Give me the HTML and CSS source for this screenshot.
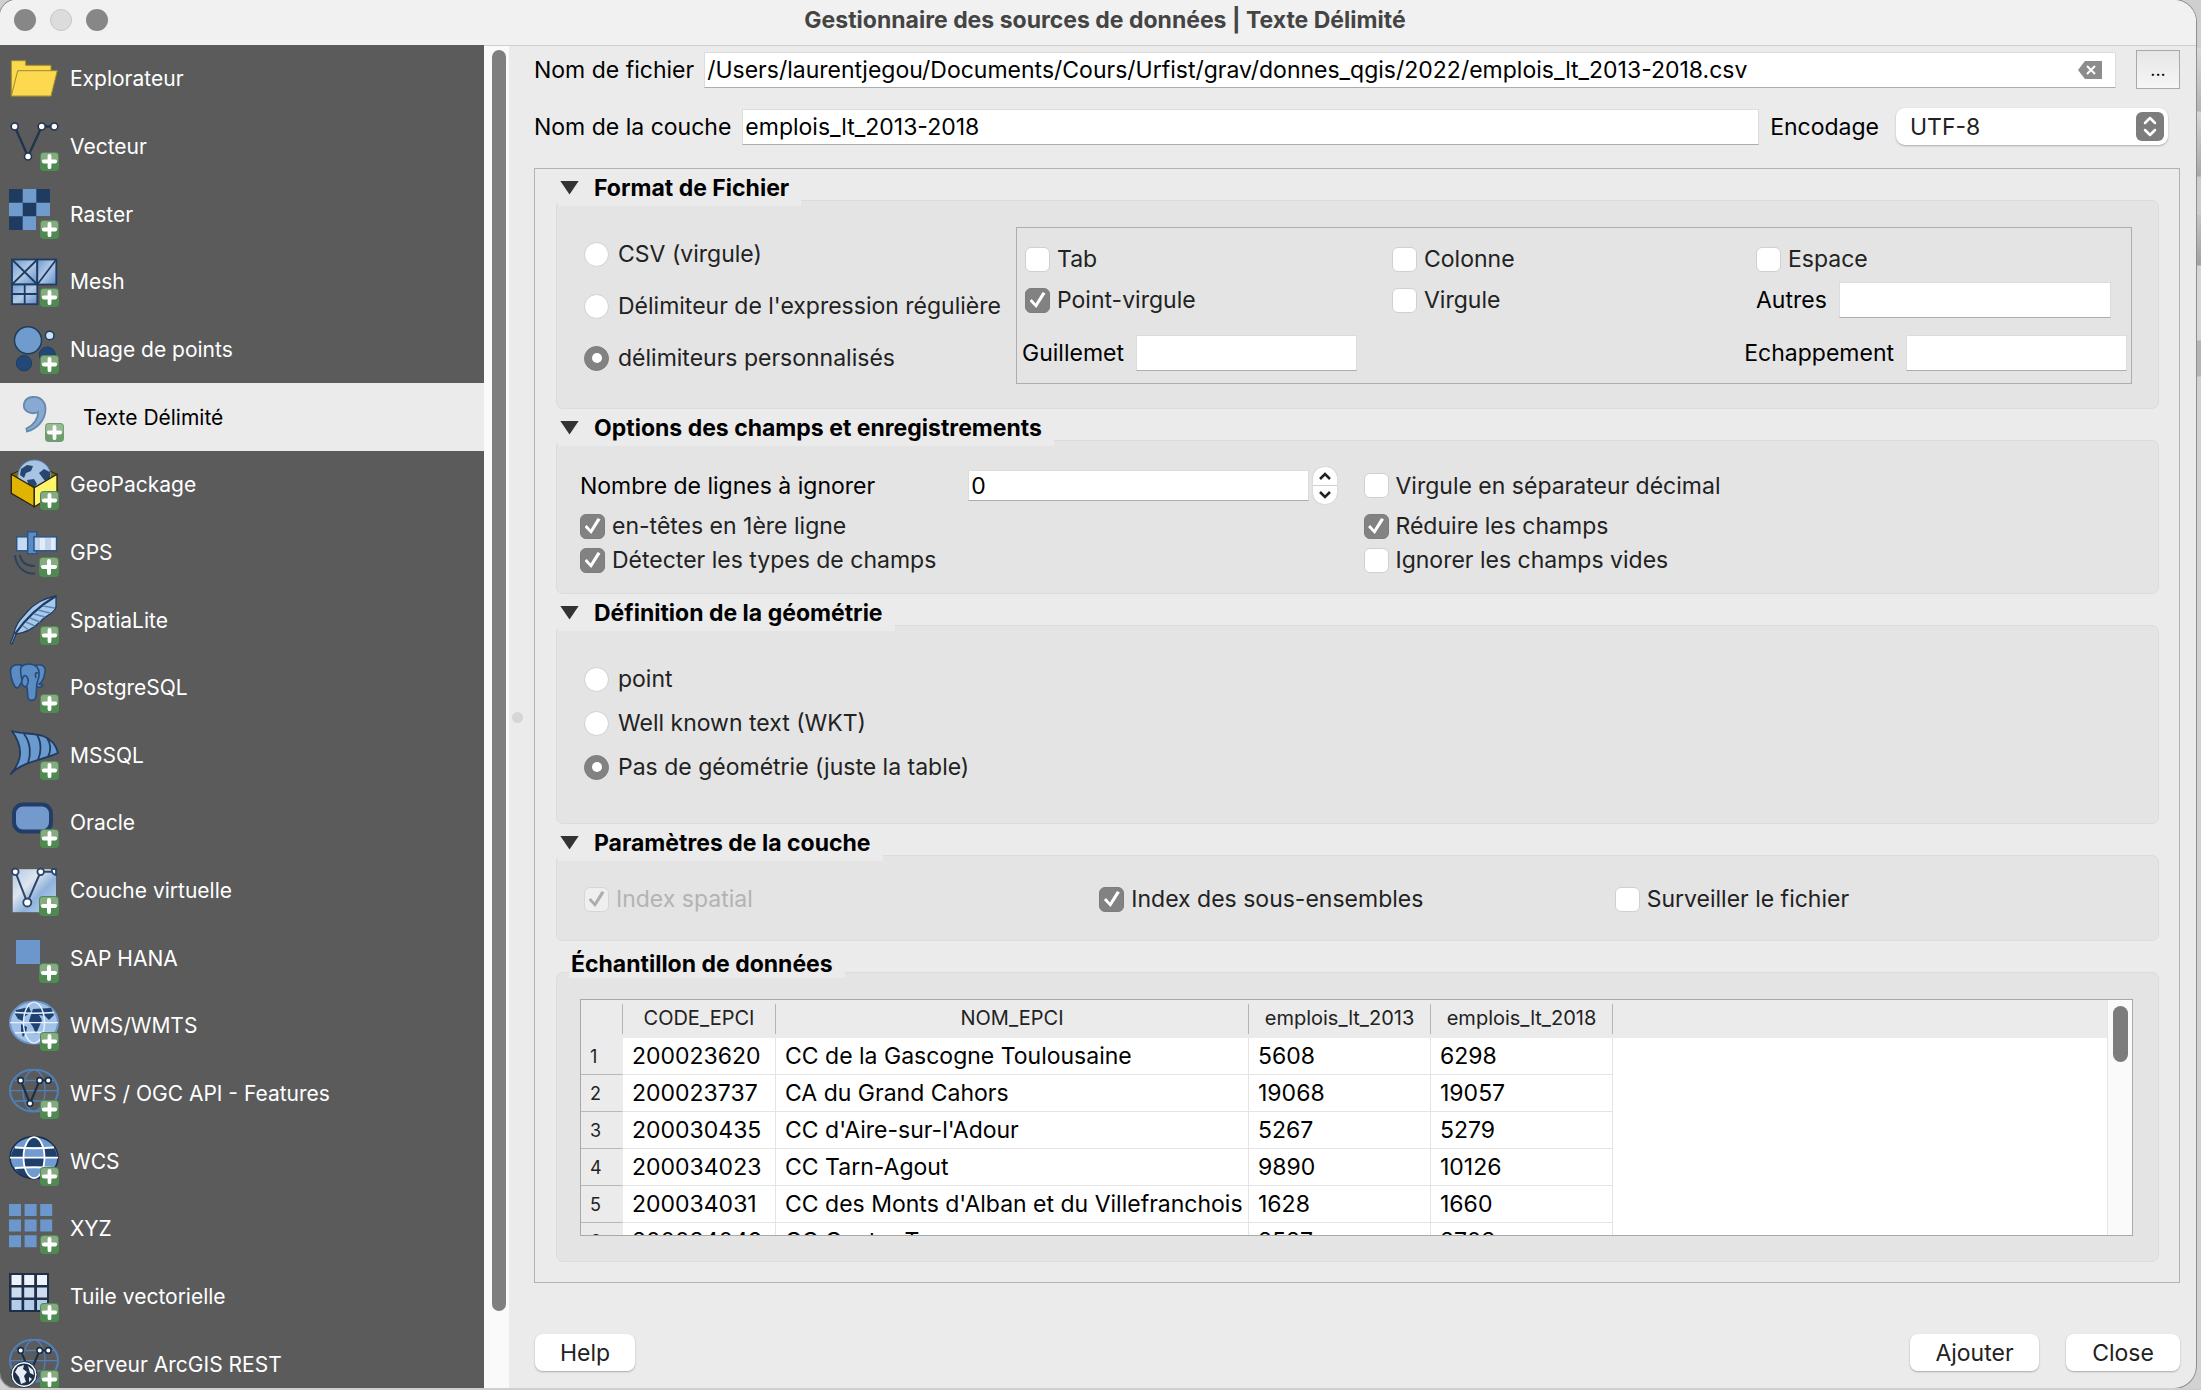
FILE: index.html
```html
<!DOCTYPE html>
<html lang="fr">
<head>
<meta charset="utf-8">
<title>Gestionnaire des sources de données | Texte Délimité</title>
<link rel="stylesheet" href="styles.css">
</head>
<body>
<svg class="defs" width="0" height="0" aria-hidden="true">
  <defs>
    <linearGradient id="pale" x1="0" y1="0" x2="1" y2="1">
      <stop offset="0" stop-color="#6f9bd0"/><stop offset=".5" stop-color="#b4cbe8"/><stop offset="1" stop-color="#5f8fc8"/>
    </linearGradient>
    <linearGradient id="sheet" x1="0" y1="0" x2="1" y2="1">
      <stop offset="0" stop-color="#b3c9e4"/><stop offset=".35" stop-color="#dfe6ef"/><stop offset=".6" stop-color="#8fb2dc"/><stop offset="1" stop-color="#c3d8f0"/>
    </linearGradient>
    <symbol id="badge" viewBox="0 0 20 20">
      <rect x="0" y="0" width="20" height="20" rx="4" fill="#4f8a50"/>
      <path d="M1 10V4Q1 1 4 1H16Q19 1 19 4V10Z" fill="#86ab82"/>
      <path d="M10 4V16M4 10H16" stroke="#fff" stroke-width="4" stroke-linecap="round"/>
    </symbol>
    <symbol id="lines" viewBox="0 0 50 50">
      <path d="M1 21.600H49M6 11.500Q25 13 45 11.500M6 32Q25 30.500 45 32" />
      <ellipse cx="25" cy="21.600" rx="10.500" ry="20.500"/>
    </symbol>
    <symbol id="netglobe" viewBox="0 0 50 50">
      <g fill="none" stroke="#4f80ba" stroke-width="1.300">
        <path d="M1 21.600H49M6 11.500H45M6 32H45"/>
        <ellipse cx="25" cy="21.600" rx="11" ry="20.500"/>
        <ellipse cx="25" cy="21.600" rx="24" ry="21" stroke-width="2"/>
      </g>
      <path d="M11.700 11.400L21 34.400L30.700 11.400H39.300" fill="none" stroke="#1d2f48" stroke-width="2.200"/>
      <g fill="#fff" stroke="#1d2f48" stroke-width="1.600">
        <circle cx="11.700" cy="11.400" r="2.800"/><circle cx="21" cy="34.400" r="2.800"/><circle cx="30.700" cy="11.400" r="2.800"/><circle cx="39.300" cy="11.400" r="2.800"/>
      </g>
    </symbol>
  </defs>
</svg>

<div class="window">
  <header class="titlebar">
    <div class="lights"><button class="light" aria-label="Fermer"></button><button class="light light-off" aria-label="Réduire" disabled></button><button class="light" aria-label="Agrandir"></button></div>
    <h1 class="title">Gestionnaire des sources de données | Texte Délimité</h1>
  </header>

  <div class="body">
    <nav class="sidebar">
      <ul class="sources">
        <li><a class="source" href="#"><svg class="icon" viewBox="0 0 50 50"><path d="M2.300 6.700H16.700V11.300H42V42H2.300Z" fill="#fbd94c" stroke="#9c8a32"/><path d="M8.700 16.700H48.300L42 42H2.300Z" fill="#fcd94e" stroke="#9c8a32"/></svg>Explorateur</a></li>
        <li><a class="source" href="#"><svg class="icon" viewBox="0 0 50 50"><path d="M5.700 5.500L19 35.500L32.700 5.500H45.300" fill="none" stroke="#22344e" stroke-width="2.400"/><g fill="#fff" stroke="#22344e" stroke-width="1.600"><circle cx="5.700" cy="5.500" r="3.500"/><circle cx="19" cy="35.500" r="3.500"/><circle cx="32.700" cy="5.500" r="3.500"/><circle cx="45.300" cy="5.500" r="3.500"/></g><use href="#badge" x="31" y="31" width="19" height="19"/></svg>Vecteur</a></li>
        <li><a class="source" href="#"><svg class="icon" viewBox="0 0 50 50"><path d="M0 0H41V27H27V41H0Z" fill="#6f9bcd"/><path d="M0 0H13.700V13.700H0ZM27.300 0H41V13.700H27.300ZM13.700 13.700H27.300V27.300H13.700ZM0 27.300H13.700V41H0Z" fill="#1f3c60"/><use href="#badge" x="31" y="31" width="19" height="19"/></svg>Raster</a></li>
        <li><a class="source" href="#"><svg class="icon" viewBox="0 0 50 50"><g stroke="#1f3c60" stroke-width="1.800" fill="url(#pale)"><rect x="3" y="2.500" width="25.300" height="25"/><rect x="28.300" y="2.500" width="19" height="25"/><rect x="3" y="27.500" width="25.300" height="19.700"/><path d="M3 2.500L28.300 27.500M28.300 2.500L3 27.500M47.300 2.500L28.300 27.500M15.700 27.500V47M3 37H28.300" fill="none"/></g><use href="#badge" x="31" y="31" width="19" height="19"/></svg>Mesh</a></li>
        <li><a class="source" href="#"><svg class="icon" viewBox="0 0 50 50"><circle cx="19" cy="16.200" r="13.500" fill="#6f9bcd" stroke="#1f3c60" stroke-width="1.500"/><circle cx="40.700" cy="11.500" r="4.300" fill="#cfe2f8" stroke="#1f3c60" stroke-width="1.500"/><circle cx="38.300" cy="31" r="8" fill="#22487a" stroke="#1f3c60"/><circle cx="15" cy="39.200" r="7.700" fill="#22487a" stroke="#1f3c60"/><use href="#badge" x="31" y="31" width="19" height="19"/></svg>Nuage de points</a></li>
        <li><a class="source source-active" href="#" aria-current="page"><svg class="icon" viewBox="0 0 50 50"><path d="M19 5C26 4.500 31.500 9 31.500 17C31.500 29 22 37 13 39.500L12.500 36.500C20 33 24.500 26 24 20C21 21.500 17 21.500 14 20C7 16 9 5.500 19 5Z" fill="#7099cc" stroke="#44709f" stroke-width="1.800"/><use href="#badge" x="31" y="31" width="19" height="19"/></svg>Texte Délimité</a></li>
        <li><a class="source" href="#"><svg class="icon" viewBox="0 0 50 50"><path d="M2.300 14.300L25.300 4L48 14.300L25.300 27.700Z" fill="#7a6a10" stroke="#2a2408"/><circle cx="25.300" cy="16.500" r="16.500" fill="#a9c3e4" stroke="#5f86b5"/><path d="M12 9L18 5L24 6L22 11L17 13L15 18L11 15ZM30 13L35 9L41 12V18L36 21ZM18 20L25 19L28 24L24 29L20 26Z" fill="#27466d"/><path d="M2.300 14.300L25.300 27.700V46.700L2.300 33.300Z" fill="#e0b400" stroke="#2a2408" stroke-width="1.300"/><path d="M48 14.300L25.300 27.700V46.700L48 33.300Z" fill="#fff36a" stroke="#2a2408" stroke-width="1.300"/><use href="#badge" x="31" y="31" width="19" height="19"/></svg>GeoPackage</a></li>
        <li><a class="source" href="#"><svg class="icon" viewBox="0 0 50 50"><path d="M6 28C7 39 14 46.500 26 46.800M11 28C12 35 17 39 26 39" fill="none" stroke="#2b4360" stroke-width="2"/><g stroke="#2c5586" stroke-width="1.500"><rect x="7.700" y="9.800" width="12" height="14" fill="#c4dbf2"/><rect x="18.700" y="4.800" width="9" height="22" fill="#5c8cc4"/><rect x="25" y="9.800" width="22.700" height="14" fill="#bcd4ee"/></g><path d="M31 11H36V23H31ZM42 11H46V23H42Z" fill="#e6ebf2"/><use href="#badge" x="30" y="30" width="20" height="20"/></svg>GPS</a></li>
        <li><a class="source" href="#"><svg class="icon" viewBox="0 0 50 50"><path d="M47 1C34 4 26 8 18 17C10 26 6 30 5 39L1.500 48L3 49L7 39C17 38 25 33 32 26C36 21 46 18 47 12Z" fill="#a9c9ea" stroke="#1f3c60" stroke-width="1.300"/><path d="M47 1C30 11 17 23 6 39" fill="none" stroke="#1f3c60" stroke-width="2.200"/><path d="M34 11L46 13M29 15L41 18M25 19L36 22M21 23L31 27M17 27L26 31M14 31L20 35" stroke="#5c86b5" stroke-width="1.400"/><use href="#badge" x="31" y="31" width="19" height="19"/></svg>SpatiaLite</a></li>
        <li><a class="source" href="#"><svg class="icon" viewBox="0 0 50 50"><g fill="#5c8cc4" stroke="#254a78" stroke-width="1.600" stroke-linejoin="round"><path d="M14 3C8 0 1 2 1.500 9C2 17 5 24 8 25C10 25 12 20 13 18Z"/><path d="M26 3C32 0 37 3 36 9C35 16 32 20 30 21L34 22C32 25 29 25 27 23Z"/><path d="M12 4C16 0 24 0 28 4C32 9 30 15 28 20C27 26 28 33 26 36C24 38 20 38 19 35L18 24C14 24 12 21 13 17C12 13 11 8 12 4Z"/><path d="M13 17Q15 10 18 14T17 24M27 15Q25 9 29 10" fill="none"/></g><use href="#badge" x="31" y="31" width="19" height="19"/></svg>PostgreSQL</a></li>
        <li><a class="source" href="#"><svg class="icon" viewBox="0 0 50 50"><path d="M3 1C12 4 24 3 34 6C42 9 47 15 49 22.700C38 29 14 31 1.700 44C13 31 15 18 3 1Z" fill="#6a9ace" stroke="#1f3c60" stroke-width="1.800" stroke-linejoin="round"/><path d="M15 4C22 13 22 25 19 33M28 5C33 13 32 23 29 30M38 8C42 14 42 21 39 27" fill="none" stroke="#1f3c60" stroke-width="1.800"/><use href="#badge" x="31" y="31" width="19" height="19"/></svg>MSSQL</a></li>
        <li><a class="source" href="#"><svg class="icon" viewBox="0 0 50 50"><rect x="5" y="6.500" width="37" height="27" rx="9" fill="#7499cd" stroke="#213d68" stroke-width="4"/><use href="#badge" x="31" y="31" width="19" height="19"/></svg>Oracle</a></li>
        <li><a class="source" href="#"><svg class="icon" viewBox="0 0 50 50"><rect x="3.700" y="3.200" width="43.300" height="43" fill="url(#sheet)"/><path d="M6.300 5.800L18.300 36.500L31.700 5.800H45.300" fill="none" stroke="#2c4668" stroke-width="2"/><g fill="#fff" stroke="#2c4668" stroke-width="1.800"><circle cx="18.300" cy="36.500" r="4"/><circle cx="31.700" cy="5.800" r="3.300"/><circle cx="6.300" cy="5.800" r="3.300"/><path d="M47 3V9Q42 8 43 3Z"/></g><use href="#badge" x="30" y="30" width="20" height="20"/></svg>Couche virtuelle</a></li>
        <li><a class="source" href="#"><svg class="icon" viewBox="0 0 50 50"><rect x="3" y="3" width="32.500" height="33" fill="none" stroke="#4f5c70" stroke-width="2" stroke-dasharray="2 3"/><rect x="7" y="7" width="24" height="24" fill="#6c97cd"/><use href="#badge" x="30" y="30" width="20" height="20"/></svg>SAP HANA</a></li>
        <li><a class="source" href="#"><svg class="icon" viewBox="0 0 50 50"><ellipse cx="25" cy="21.600" rx="24" ry="21" fill="#a3c2e8" stroke="#6d97ca" stroke-width="2"/><path d="M7 9L20 6L22 11L15 16L14 20L9 18L6 13ZM12 23L18 26L17 32L14 36L12 30ZM24 8L42 7L45 14L40 19L36 15L30 14L33 19L30 26L27 33L24 26L20 20L22 14Z" fill="#1f4371"/><use href="#lines" width="50" height="50" fill="none" stroke="#e8f2ff" stroke-width="1.400"/><use href="#badge" x="31" y="31" width="19" height="19"/></svg>WMS/WMTS</a></li>
        <li><a class="source" href="#"><svg class="icon" viewBox="0 0 50 50"><use href="#netglobe" width="50" height="50"/><use href="#badge" x="31" y="31" width="19" height="19"/></svg>WFS / OGC API - Features</a></li>
        <li><a class="source" href="#"><svg class="icon" viewBox="0 0 50 50"><ellipse cx="25" cy="21.600" rx="24" ry="21" fill="#6f9bd0"/><path d="M2 21.600Q2 16 6 11.500H16L14.500 21.600ZM34 11.500H45Q48 16 48 21.600H35.500ZM17 11.500Q20 1 25 1T33 11.500ZM14.500 21.600H35.500L34 32H16ZM6 32H16L22 42Q11 41 6 32ZM34 32H45Q40 41 28 42Z" fill="#1f3f6b"/><ellipse cx="25" cy="21.600" rx="24" ry="21" fill="none" stroke="#1d2f4c" stroke-width="1.600"/><use href="#lines" width="50" height="50" fill="none" stroke="#fff" stroke-width="1.800"/><use href="#badge" x="31" y="31" width="19" height="19"/></svg>WCS</a></li>
        <li><a class="source" href="#"><svg class="icon" viewBox="0 0 50 50"><path d="M0 0h12v12h-12zM15.600 0h12v12h-12zM31.200 0h12v12h-12zM0 15.600h12v12h-12zM15.600 15.600h12v12h-12zM31.200 15.600h12v12h-12zM0 31.200h12v12h-12zM15.600 31.200h12v12h-12z" fill="#6c97cd"/><use href="#badge" x="31" y="31" width="19" height="19"/></svg>XYZ</a></li>
        <li><a class="source" href="#"><svg class="icon" viewBox="0 0 50 50"><rect x="0" y="1" width="40" height="39" fill="#1f2f48"/><path d="M2.500 3h10v10h-10zM15.200 3h10v10h-10zM28 3h10v10h-10z" fill="#eef3fa"/><path d="M2.500 15.500h10v10h-10zM15.200 15.500h10v10h-10zM28 15.500h10v10h-10z" fill="#cddcef"/><path d="M2.500 28h10v10h-10zM15.200 28h10v10h-10zM28 28h10v10h-10z" fill="#b3cce9"/><use href="#badge" x="31" y="31" width="19" height="19"/></svg>Tuile vectorielle</a></li>
        <li><a class="source" href="#"><svg class="icon" viewBox="0 0 50 50"><use href="#netglobe" width="50" height="50"/><circle cx="15" cy="35.500" r="13" fill="#fff" stroke="#1d2f48"/><circle cx="15" cy="35.500" r="11" fill="#1d2f48"/><path d="M6 33L9 28L15 26L14 30L18 33L15 37L17 43L12 45L10 38ZM19 27L24 31L25 36L21 34ZM20 38L23 40L20 43Z" fill="#e8edf4"/><use href="#badge" x="31" y="31" width="19" height="19"/></svg>Serveur ArcGIS REST</a></li>
      </ul>
    </nav>
    <div class="track"><div class="thumb"></div></div>
    <div class="splitter"><span class="grip"></span></div>

    <main class="main">
      <div class="row row-file">
        <label for="file">Nom de fichier</label>
        <div class="field filefield">
          <input class="bare" id="file" type="text" value="/Users/laurentjegou/Documents/Cours/Urfist/grav/donnes_qgis/2022/emplois_lt_2013-2018.csv">
          <button class="clear" aria-label="Effacer"><svg width="24" height="18" viewBox="0 0 24 18"><path d="M7 0H24V18H7L0 9Z" fill="#8c8c8c"/><path d="M9 5L17 13M17 5L9 13" stroke="#fff" stroke-width="2"/></svg></button>
        </div>
        <button class="browse" aria-label="Parcourir">...</button>
      </div>
      <div class="row row-layer">
        <label for="layer">Nom de la couche</label>
        <input class="field layerfield" id="layer" type="text" value="emplois_lt_2013-2018">
        <label for="enc">Encodage</label>
        <div class="combo">
          <select id="enc"><option>UTF-8</option></select>
          <svg class="knob" width="28" height="29" viewBox="0 0 28 29"><rect width="28" height="29" rx="6" fill="#7d7d7d"/><path d="M9 11L14 6L19 11M9 18L14 23L19 18" fill="none" stroke="#fff" stroke-width="2.500" stroke-linecap="round" stroke-linejoin="round"/></svg>
        </div>
      </div>

      <div class="frame">
        <section>
          <h2 class="head"><span class="tri"></span>Format de Fichier</h2>
          <div class="box box-format">
            <div class="radios">
              <label class="opt"><input type="radio" name="fmt">CSV (virgule)</label>
              <label class="opt"><input type="radio" name="fmt">Délimiteur de l'expression régulière</label>
              <label class="opt"><input type="radio" name="fmt" checked>délimiteurs personnalisés</label>
            </div>
            <div class="delims">
              <div class="delimgrid">
                <label class="opt"><input type="checkbox">Tab</label>
                <label class="opt"><input type="checkbox">Colonne</label>
                <label class="opt"><input type="checkbox">Espace</label>
                <label class="opt"><input type="checkbox" checked>Point-virgule</label>
                <label class="opt"><input type="checkbox">Virgule</label>
                <div class="other"><label for="other">Autres</label><input class="field" id="other" type="text"></div>
              </div>
              <div class="quotes">
                <label for="quote">Guillemet</label><input class="field short" id="quote" type="text">
                <label class="push" for="esc">Echappement</label><input class="field short" id="esc" type="text">
              </div>
            </div>
          </div>
        </section>

        <section>
          <h2 class="head"><span class="tri"></span>Options des champs et enregistrements</h2>
          <div class="box box-fields">
            <label for="skip">Nombre de lignes à ignorer</label>
            <div class="spin">
              <input class="field" id="skip" type="number" value="0">
              <div class="steps">
                <button aria-label="Augmenter"><svg width="14" height="10" viewBox="0 0 14 10"><path d="M2 8L7 3L12 8" fill="none" stroke="#222" stroke-width="2.500"/></svg></button>
                <button aria-label="Diminuer"><svg width="14" height="10" viewBox="0 0 14 10"><path d="M2 2L7 7L12 2" fill="none" stroke="#222" stroke-width="2.500"/></svg></button>
              </div>
            </div>
            <label class="opt inset"><input type="checkbox">Virgule en séparateur décimal</label>
            <label class="opt wide"><input type="checkbox" checked>en-têtes en 1ère ligne</label>
            <label class="opt inset"><input type="checkbox" checked>Réduire les champs</label>
            <label class="opt wide"><input type="checkbox" checked>Détecter les types de champs</label>
            <label class="opt inset"><input type="checkbox">Ignorer les champs vides</label>
          </div>
        </section>

        <section>
          <h2 class="head"><span class="tri"></span>Définition de la géométrie</h2>
          <div class="box box-geom">
            <label class="opt"><input type="radio" name="geom">point</label>
            <label class="opt"><input type="radio" name="geom">Well known text (WKT)</label>
            <label class="opt"><input type="radio" name="geom" checked>Pas de géométrie (juste la table)</label>
          </div>
        </section>

        <section>
          <h2 class="head"><span class="tri"></span>Paramètres de la couche</h2>
          <div class="box box-params">
            <label class="opt opt-off"><input type="checkbox" checked disabled>Index spatial</label>
            <label class="opt"><input type="checkbox" checked>Index des sous-ensembles</label>
            <label class="opt"><input type="checkbox">Surveiller le fichier</label>
          </div>
        </section>

        <section class="sample">
          <h2 class="head head-plain">Échantillon de données</h2>
          <div class="box box-sample">
            <div class="view">
              <div class="tablewrap">
                <table>
                  <colgroup><col class="c-num"><col class="c-code"><col class="c-name"><col class="c-val"><col class="c-val"><col></colgroup>
                  <thead><tr><th><span></span></th><th><span>CODE_EPCI</span></th><th><span>NOM_EPCI</span></th><th><span>emplois_lt_2013</span></th><th><span>emplois_lt_2018</span></th><th></th></tr></thead>
                  <tbody>
                    <tr><th>1</th><td>200023620</td><td>CC de la Gascogne Toulousaine</td><td>5608</td><td>6298</td><td></td></tr>
                    <tr><th>2</th><td>200023737</td><td>CA du Grand Cahors</td><td>19068</td><td>19057</td><td></td></tr>
                    <tr><th>3</th><td>200030435</td><td>CC d'Aire-sur-l'Adour</td><td>5267</td><td>5279</td><td></td></tr>
                    <tr><th>4</th><td>200034023</td><td>CC Tarn-Agout</td><td>9890</td><td>10126</td><td></td></tr>
                    <tr><th>5</th><td>200034031</td><td>CC des Monts d'Alban et du Villefranchois</td><td>1628</td><td>1660</td><td></td></tr>
                    <tr><th>6</th><td>200034049</td><td>CC Centre Tarn</td><td>2527</td><td>2703</td><td></td></tr>
                  </tbody>
                </table>
              </div>
              <div class="vtrack"><div class="vthumb"></div></div>
            </div>
          </div>
        </section>
      </div>

      <footer class="actions">
        <button class="btn btn-help">Help</button>
        <button class="btn btn-add">Ajouter</button>
        <button class="btn btn-close">Close</button>
      </footer>
    </main>
  </div>
</div>
</body>
</html>
```
FILE: styles.css
```css
* { box-sizing: border-box; }

body {
  margin: 0;
  background: linear-gradient(#cfcfcf 0 48px, #d8d8d8 48px, #b4b4b4 111px, #d6d6d6 112px, #a8a8a8 176px, #cdcdcd 177px 214px, #c4c4c4 215px, #a2a2a2 265px, #d6d6d6 266px 340px, #b4b4b4 341px 376px, #d2d2d2 377px);
  font-family: Inter, "Liberation Sans", sans-serif;
  font-size: 23px;
  color: #000;
}

input, select, button { font: inherit; color: inherit; }
button { padding: 0; border: 0; background: none; }
h1, h2, ul { margin: 0; padding: 0; }

.defs { display: block; position: absolute; }

.window {
  display: flex;
  flex-direction: column;
  height: calc(100vh - 2px);
  margin-right: 5px;
  border-radius: 16px 22px 22px 16px;
  background: #ebebeb;
  box-shadow: 0 0 0 1px #8f8f8f;
  overflow: hidden;
}

/* Title bar */
.titlebar {
  display: grid;
  grid-template-columns: 120px 1fr 120px;
  align-items: center;
  flex: 0 0 46px;
  padding: 0 0 6px 14px;
  background: #f1f1f1;
  border-bottom: 1px solid #cfcfcf;
}
.lights { display: flex; gap: 14px; }
.light { width: 22px; height: 22px; border-radius: 50%; background: #878787; }
.light-off { background: #dcdcdc; border: 1px solid #c6c6c6; }
.title { text-align: center; font-size: 23px; font-weight: 700; line-height: 28px; color: #444; }

.body { display: flex; flex: 1; min-height: 0; }

/* Source list */
.sidebar { flex: 0 0 484px; margin-top: -1px; background: #5b5b5b; overflow: hidden; }
.sources { display: grid; grid-auto-rows: 1fr; height: calc(100% + 10px); list-style: none; }
.source {
  display: flex;
  align-items: center;
  gap: 11px;
  height: 100%;
  padding-left: 9px;
  color: #fff;
  font-size: 21px;
  text-decoration: none;
}
.source-active { gap: 19px; padding-left: 14px; background: #ebebeb; color: #000; }
.source-active .icon { opacity: .8; }
.icon { flex: none; width: 50px; height: 50px; overflow: visible; }

.track { flex: 0 0 25px; padding: 4px 3px 77px 8px; background: #fafafa; }
.thumb { height: 100%; border-radius: 7px; background: #7f7f7f; }
.splitter { flex: 0 0 16px; display: flex; align-items: center; justify-content: center; }
.grip { width: 11px; height: 11px; border-radius: 50%; background: #d6d6d6; }

/* Form */
.main { flex: 1; min-width: 0; display: flex; flex-direction: column; padding: 4px 16px 17px 9px; }

.row { display: flex; align-items: center; }
.row-file { height: 39px; margin-bottom: 19px; gap: 10px; }
.row-layer { height: 37px; margin-bottom: 23px; gap: 11px; padding-right: 12px; }

.field {
  height: 36px;
  min-width: 0;
  padding: 0 2px;
  border: 1px solid #dcdcdc;
  border-bottom-color: #adadad;
  border-radius: 0;
  background: #fff;
  outline: 0;
}
.filefield { flex: 1; display: flex; align-items: center; padding-right: 13px; }
.bare { flex: 1; min-width: 0; padding: 0; border: 0; background: none; outline: 0; }
.clear { display: flex; }
.layerfield { flex: 1; }
.browse {
  width: 44px;
  height: 39px;
  margin-left: 10px;
  border: 1px solid #a9a9a9;
  background: linear-gradient(#e6e6e6, #f6f6f6);
  font-size: 18px;
}
.combo {
  display: flex;
  align-items: center;
  width: 272px;
  height: 37px;
  margin-left: 6px;
  padding-right: 4px;
  border-radius: 9px;
  background: #fff;
  box-shadow: 0 1px 2px #aaa;
}
.combo select { flex: 1; appearance: none; border: 0; padding: 0 14px; background: none; color: #222; outline: 0; }
.knob { flex: none; }

.frame {
  flex: 1;
  min-height: 0;
  display: flex;
  flex-direction: column;
  padding: 0 20px 20px 21px;
  border: 1px solid #b2b2b2;
}

.head {
  position: relative;
  display: flex;
  align-items: center;
  gap: 15px;
  width: fit-content;
  height: 37px;
  margin: 0 0 -6px 2px;
  padding: 0 12px 0 2px;
  background: #ebebeb;
  font-size: 23px;
  font-weight: 700;
}
.head-plain { margin-left: 13px; padding-top: 9px; }
.tri {
  width: 19px;
  height: 14px;
  background: #333;
  clip-path: polygon(0 0, 100% 0, 50% 100%);
}
.box { border: 1px solid #dcdcdc; border-radius: 7px; background: #e4e4e4; }

.opt { display: flex; align-items: center; color: #222; white-space: nowrap; }
.opt-off { color: #b3b3b3; }

input[type="checkbox"], input[type="radio"] {
  appearance: none;
  flex: none;
  display: grid;
  place-items: center;
  width: 25px;
  height: 25px;
  margin: 0 7px 0 0;
  border: 1px solid #d0d0d0;
  background: #fff;
}
input[type="checkbox"] { border-radius: 6px; }
input[type="radio"] { border-radius: 50%; margin-right: 9px; }
input[type="checkbox"]:checked, input[type="radio"]:checked { border-color: #7c7c7c; background: #828282; }
input[type="radio"]:checked::before { content: ""; width: 10px; height: 10px; border-radius: 50%; background: #fff; }
input[type="checkbox"]:checked::before {
  content: "";
  width: 16px;
  height: 16px;
  background: #fff;
  clip-path: polygon(0 56%, 14% 44%, 38% 72%, 82% 0, 100% 10%, 42% 100%);
}
input[type="checkbox"]:disabled { border-color: #d6d6d6; background: #efefef; }
input[type="checkbox"]:disabled::before { background: #adadad; }

.box-format { display: grid; grid-template-columns: 432px 1fr; padding: 26px 26px 24px 27px; }
.radios { display: grid; grid-auto-rows: 52px; align-items: center; align-content: end; }
.delims { padding: 13px 4px 12px 8px; border: 1px solid #adadad; }
.delimgrid {
  display: grid;
  grid-template-columns: minmax(0, 367fr) minmax(0, 364fr) minmax(0, 371fr);
  grid-auto-rows: 36px;
  row-gap: 5px;
  margin-bottom: 17px;
}
.other { display: flex; align-items: center; gap: 12px; padding-right: 16px; }
.other .field { flex: 1; }
.quotes { display: flex; align-items: center; gap: 12px; height: 36px; margin-left: -3px; }
.short { width: 221px; }
.push { margin-left: auto; }

.box-fields {
  display: grid;
  grid-template-columns: minmax(0, 1fr) minmax(0, 1fr) minmax(0, 2fr);
  grid-template-rows: 47px 34px 34px;
  align-items: center;
  padding: 21px 25px 16px 23px;
}
.spin { display: flex; align-items: center; gap: 4px; padding-right: 20px; }
.spin .field { flex: 1; height: 31px; appearance: textfield; }
.spin .field::-webkit-inner-spin-button { appearance: none; }
.steps { display: flex; flex-direction: column; width: 24px; height: 37px; border-radius: 11px; background: #fff; box-shadow: 0 0 1px #999; }
.steps button { flex: 1; display: grid; place-items: center; }
.steps button + button { border-top: 1px solid #d0d0d0; }
.inset { padding-left: 7px; }
.wide { grid-column: span 2; }

.box-geom { display: grid; grid-auto-rows: 44px; align-items: center; padding: 31px 27px 34px; }
.box-params { display: grid; grid-template-columns: repeat(3, 1fr); grid-auto-rows: 40px; align-items: center; padding: 23px 28px 21px 27px; }

.sample { flex: 1; min-height: 0; display: flex; flex-direction: column; }
.box-sample { flex: 1; min-height: 0; display: flex; padding: 26px 25px 25px 23px; }
.view { flex: 1; min-width: 0; display: flex; border: 1px solid #a9a9a9; background: #fff; overflow: hidden; }
.tablewrap { flex: 1; min-width: 0; overflow: hidden; }
table { width: 100%; height: 260px; border-collapse: separate; border-spacing: 0; table-layout: fixed; }
.c-num { width: 42px; }
.c-code { width: 153px; }
.c-name { width: 473px; }
.c-val { width: 182px; }
th { padding: 0; background: #ebebeb; font-size: 18px; font-weight: 400; color: #222; }
thead th { height: 38px; padding: 4px 0; font-size: 20px; }
thead span { display: block; height: 30px; line-height: 28px; border-right: 1px solid #b5b5b5; }
tbody th { padding-left: 9px; text-align: left; border-right: 1px solid #ebebeb; border-bottom: 1px solid #b9b9b9; }
td { padding: 0 0 0 9px; border-right: 1px solid #e4e4e4; border-bottom: 1px solid #e4e4e4; white-space: nowrap; }
td:last-child { border: 0; }
.vtrack { flex: 0 0 25px; padding: 6px 4px 0 5px; border-left: 1px solid #e6e6e6; background: #fafafa; }
.vthumb { height: 56px; border-radius: 8px; background: #7c7c7c; }

.actions { display: flex; gap: 27px; margin-top: 51px; }
.btn { height: 37px; border-radius: 8px; background: #fff; box-shadow: 0 1px 2px #aaa; color: #222; }
.btn-help { width: 100px; margin: 0 auto 0 1px; }
.btn-add { width: 129px; }
.btn-close { width: 114px; }
```
